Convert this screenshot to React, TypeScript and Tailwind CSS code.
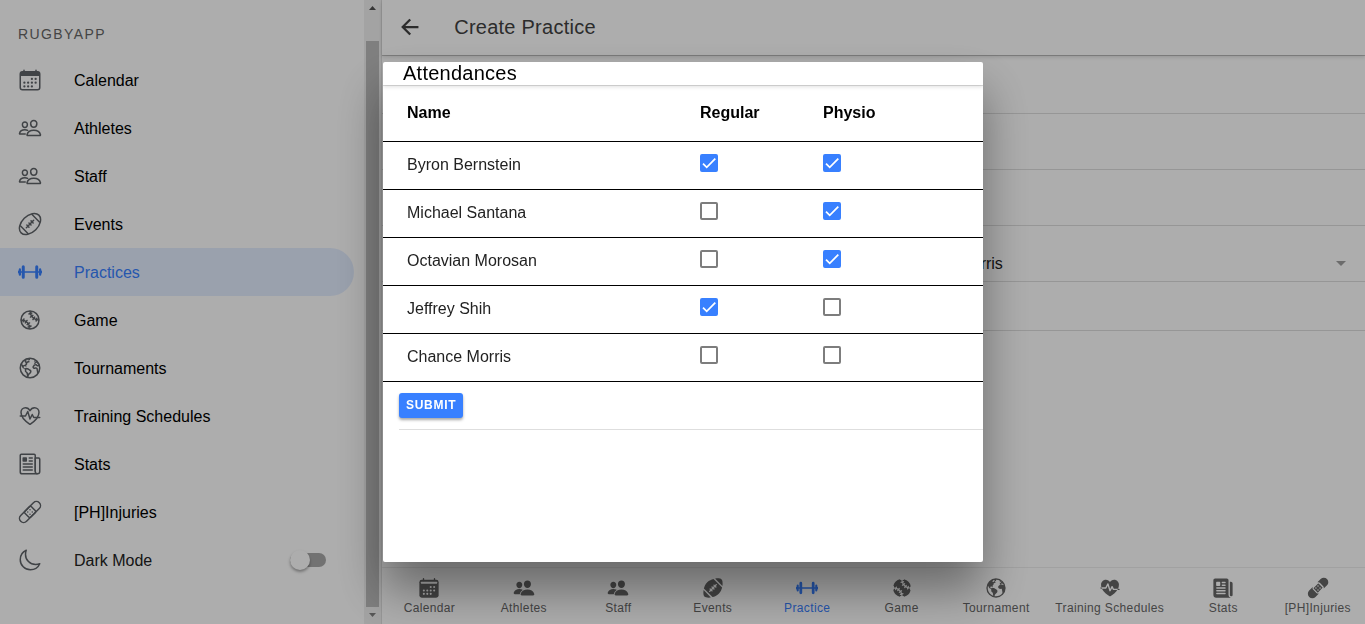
import { useState } from "react";
import type { ComponentType } from "react";
import {
  IoAmericanFootball,
  IoAmericanFootballOutline,
  IoArrowBackSharp,
  IoBandage,
  IoBandageOutline,
  IoBaseball,
  IoBaseballOutline,
  IoEarth,
  IoEarthOutline,
  IoFitness,
  IoFitnessOutline,
  IoMoonOutline,
  IoNewspaper,
  IoNewspaperOutline,
  IoPeople,
  IoPeopleOutline,
} from "react-icons/io5";

type IconProps = { className?: string };
type NavItem = { label: string; icon: ComponentType<IconProps>; active?: boolean };

const calendarDots = [
  [296, 232],
  [376, 232],
  [136, 312],
  [216, 312],
  [296, 312],
  [376, 312],
  [136, 392],
  [216, 392],
  [296, 392],
];

function CalendarOutline({ className }: IconProps) {
  return (
    <svg viewBox="0 0 512 512" aria-hidden="true" className={className} fill="currentColor">
      <rect x="48" y="80" width="416" height="384" rx="48" fill="none" stroke="currentColor" strokeWidth="32" />
      <path d="M128 48v32M384 48v32" stroke="currentColor" strokeWidth="32" strokeLinecap="round" />
      <path d="M96 72h320a48 48 0 0 1 48 48v48H48v-48a48 48 0 0 1 48-48z" />
      {calendarDots.map(([x, y]) => (
        <circle key={`${x}-${y}`} cx={x} cy={y} r="24" />
      ))}
    </svg>
  );
}

function CalendarFilled({ className }: IconProps) {
  return (
    <svg viewBox="0 0 512 512" aria-hidden="true" className={className}>
      <mask id="calendar-cutouts">
        <rect width="512" height="512" fill="white" />
        <rect x="68" y="112" width="376" height="44" rx="8" fill="black" />
        {calendarDots.map(([x, y]) => (
          <circle key={`${x}-${y}`} cx={x} cy={y} r="24" fill="black" />
        ))}
      </mask>
      <path d="M128 40v40M384 40v40" stroke="currentColor" strokeWidth="32" strokeLinecap="round" />
      <rect x="32" y="64" width="448" height="416" rx="56" fill="currentColor" mask="url(#calendar-cutouts)" />
    </svg>
  );
}

function Barbell({ className }: IconProps) {
  return (
    <svg
      viewBox="0 0 512 512"
      aria-hidden="true"
      className={className}
      fill="currentColor"
      stroke="currentColor"
      strokeWidth="32"
      strokeLinecap="round"
      strokeLinejoin="round"
    >
      <path d="M48 256h416M16 240v32M496 240v32" />
      <rect x="384" y="128" width="32" height="256" rx="16" />
      <rect x="96" y="128" width="32" height="256" rx="16" />
      <rect x="32" y="192" width="16" height="128" rx="8" />
      <rect x="464" y="192" width="16" height="128" rx="8" />
    </svg>
  );
}

const menuItems: NavItem[] = [
  { label: "Calendar", icon: CalendarOutline },
  { label: "Athletes", icon: IoPeopleOutline },
  { label: "Staff", icon: IoPeopleOutline },
  { label: "Events", icon: IoAmericanFootballOutline },
  { label: "Practices", icon: Barbell, active: true },
  { label: "Game", icon: IoBaseballOutline },
  { label: "Tournaments", icon: IoEarthOutline },
  { label: "Training Schedules", icon: IoFitnessOutline },
  { label: "Stats", icon: IoNewspaperOutline },
  { label: "[PH]Injuries", icon: IoBandageOutline },
];

const tabItems: NavItem[] = [
  { label: "Calendar", icon: CalendarFilled },
  { label: "Athletes", icon: IoPeople },
  { label: "Staff", icon: IoPeople },
  { label: "Events", icon: IoAmericanFootball },
  { label: "Practice", icon: Barbell, active: true },
  { label: "Game", icon: IoBaseball },
  { label: "Tournament", icon: IoEarth },
  { label: "Training Schedules", icon: IoFitness },
  { label: "Stats", icon: IoNewspaper },
  { label: "[PH]Injuries", icon: IoBandage },
];

type Attendance = { name: string; regular: boolean; physio: boolean };

const initialAttendances: Attendance[] = [
  { name: "Byron Bernstein", regular: true, physio: true },
  { name: "Michael Santana", regular: false, physio: true },
  { name: "Octavian Morosan", regular: false, physio: true },
  { name: "Jeffrey Shih", regular: true, physio: false },
  { name: "Chance Morris", regular: false, physio: false },
];

function Scrollbar() {
  return (
    <div aria-hidden="true" className="flex w-[17px] shrink-0 flex-col items-center bg-[#f1f1f1]">
      <svg viewBox="0 0 17 17" className="size-[17px] shrink-0 fill-[#505050]">
        <path d="M5 10h7L8.5 6z" />
      </svg>
      <div className="mt-6 w-[13px] flex-1 bg-[#bcbcbc]" />
      <svg viewBox="0 0 17 17" className="size-[17px] shrink-0 fill-[#808080]">
        <path d="M5 6h7L8.5 10z" />
      </svg>
    </div>
  );
}

function SideMenu() {
  const [dark, setDark] = useState(false);
  return (
    <aside className="flex w-[28%] shrink-0 border-r border-[#dedede]">
      <div className="min-w-0 flex-1 pt-3 pr-2.5">
        <h2 className="flex h-11 items-center pl-[18px] text-sm tracking-widest text-[#666666]">RUGBYAPP</h2>
        <nav>
          {menuItems.map(({ label, icon: Icon, active }) => (
            <a
              key={label}
              href="#"
              className={`flex h-12 items-center gap-8 rounded-r-full pl-[18px] ${
                active ? "bg-[#3880ff]/14 text-[#3880ff]" : "text-black"
              }`}
            >
              <Icon className={`size-6 shrink-0 ${active ? "text-[#3880ff]" : "text-[#5f6368]"}`} />
              <span className="pt-0.5">{label}</span>
            </a>
          ))}
        </nav>
        <div className="flex h-12 items-center gap-8 pr-7 pl-[18px]">
          <IoMoonOutline className="size-6 shrink-0 text-[#5f6368]" />
          <label htmlFor="dark-mode" className="flex-1 pt-0.5 text-[#222222]">
            Dark Mode
          </label>
          <input
            id="dark-mode"
            type="checkbox"
            role="switch"
            checked={dark}
            onChange={(e) => setDark(e.target.checked)}
            className="flex h-3.5 w-9 appearance-none items-center rounded-full bg-[#a9a9a9] before:size-5 before:shrink-0 before:rounded-full before:bg-white before:shadow-[0_2px_3px_rgba(0,0,0,0.35)] checked:bg-[#3880ff]/50 checked:before:ml-4"
          />
        </div>
      </div>
      <Scrollbar />
    </aside>
  );
}

function PracticePage() {
  const names = initialAttendances.map((a) => a.name).join(", ");
  return (
    <main className="flex min-w-0 flex-1 flex-col">
      <header className="flex h-[55px] shrink-0 items-center gap-8 px-4 pb-0.5 shadow-[0_1px_0_rgba(0,0,0,0.2),0_2px_4px_rgba(0,0,0,0.15)]">
        <button type="button" aria-label="Back" className="size-6 text-[#424242]">
          <IoArrowBackSharp className="size-6" />
        </button>
        <h1 className="text-xl tracking-[0.0125em] text-[#424242]">Create Practice</h1>
      </header>
      <form className="flex-1">
        <div className="h-[59px] border-b border-[#dedede]" />
        <div className="h-14 border-b border-[#dedede]" />
        <div className="h-14 border-b border-[#dedede]" />
        <div className="flex h-14 items-center border-b border-[#dedede] pt-5 pr-[19px] pl-[34px]">
          <select aria-label="Athletes" className="min-w-0 flex-1 appearance-none text-[#222222]">
            <option>{names}</option>
          </select>
          <svg viewBox="0 0 10 5" aria-hidden="true" className="h-[5px] w-2.5 shrink-0 fill-[#a0a0a0]">
            <path d="M0 0h10L5 5z" />
          </svg>
        </div>
        <div className="h-[49px] border-b border-[#dedede]" />
      </form>
      <nav className="flex h-[57px] shrink-0 border-t border-[#ededed]">
        {tabItems.map(({ label, icon: Icon, active }) => (
          <a
            key={label}
            href="#"
            className={`flex flex-1 flex-col items-center justify-center gap-px px-3 text-xs tracking-[0.03em] whitespace-nowrap ${
              active ? "text-[#3880ff]" : "text-[#666666]"
            }`}
          >
            <Icon className="size-[22px]" />
            <span>{label}</span>
          </a>
        ))}
      </nav>
    </main>
  );
}

type CheckProps = { label: string; checked: boolean; onChange: (value: boolean) => void };

function Check({ label, checked, onChange }: CheckProps) {
  return (
    <span className="grid size-[18px] place-items-center">
      <input
        type="checkbox"
        aria-label={label}
        checked={checked}
        onChange={(e) => onChange(e.target.checked)}
        className="size-[18px] appearance-none rounded-xs border-2 border-[#7d7d7d] bg-white [grid-area:1/1] checked:border-[#3880ff] checked:bg-[#3880ff]"
      />
      {checked && (
        <svg
          viewBox="0 0 24 24"
          aria-hidden="true"
          className="pointer-events-none size-3.5 fill-none stroke-white stroke-3 [grid-area:1/1]"
        >
          <path d="M1.73 12.91 8.1 19.28 22.79 4.59" />
        </svg>
      )}
    </span>
  );
}

function AttendanceModal() {
  const [rows, setRows] = useState(initialAttendances);
  const update = (name: string, change: Partial<Attendance>) =>
    setRows((all) => all.map((row) => (row.name === name ? { ...row, ...change } : row)));

  return (
    <div className="fixed inset-0 flex items-center justify-center bg-black/32 pl-px">
      <section
        role="dialog"
        aria-modal="true"
        aria-labelledby="attendances-title"
        className="h-[500px] w-full max-w-[600px] overflow-hidden rounded-xs bg-white shadow-[0_28px_48px_rgba(0,0,0,0.4)]"
      >
        <header className="px-5 shadow-[0_1px_0_rgba(0,0,0,0.12),0_2px_4px_rgba(0,0,0,0.12)]">
          <h2 id="attendances-title" className="text-xl leading-[23px] tracking-[0.0125em]">
            Attendances
          </h2>
        </header>
        <table className="w-full table-fixed border-collapse text-left">
          <colgroup>
            <col className="w-[317px]" />
            <col className="w-[123px]" />
            <col />
          </colgroup>
          <thead>
            <tr className="h-14 border-b border-black">
              <th className="pl-6">Name</th>
              <th>Regular</th>
              <th>Physio</th>
            </tr>
          </thead>
          <tbody>
            {rows.map((row) => (
              <tr key={row.name} className="h-12 border-b border-black">
                <td className="pl-6 text-[#222222]">{row.name}</td>
                <td className="pb-1">
                  <Check
                    label={`${row.name} regular`}
                    checked={row.regular}
                    onChange={(regular) => update(row.name, { regular })}
                  />
                </td>
                <td className="pb-1">
                  <Check
                    label={`${row.name} physio`}
                    checked={row.physio}
                    onChange={(physio) => update(row.name, { physio })}
                  />
                </td>
              </tr>
            ))}
          </tbody>
        </table>
        <div className="ml-4 flex h-12 items-center border-b border-[#dedede]">
          <button
            type="button"
            className="h-[25px] rounded-[3px] bg-[#3880ff] px-[7px] text-xs font-bold tracking-[0.06em] text-white shadow-[0_2px_3px_rgba(0,0,0,0.35)]"
          >
            SUBMIT
          </button>
        </div>
      </section>
    </div>
  );
}

export default function App() {
  return (
    <div className="flex h-screen bg-white font-['Liberation_Sans',Arial,sans-serif] text-base text-black">
      <SideMenu />
      <PracticePage />
      <AttendanceModal />
    </div>
  );
}
